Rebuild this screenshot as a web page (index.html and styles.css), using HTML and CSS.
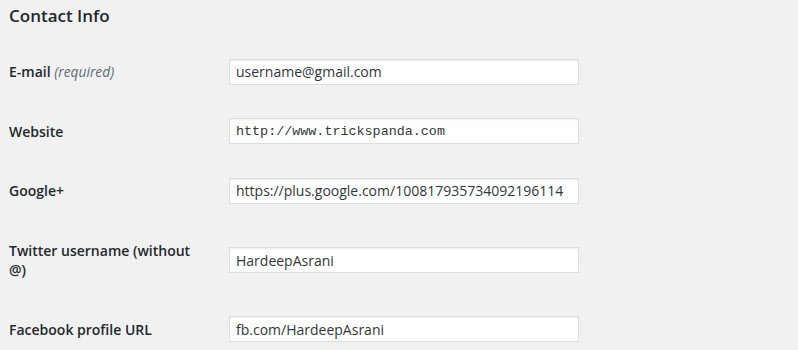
FILE: index.html
```html
<!DOCTYPE html>
<html>
<head>
  <title>Profile - Contact Info</title>
  <link rel="stylesheet" href="styles.css">
</head>
<body>

  <h2 class="section-title">Contact Info</h2>

  <div class="form-table">
    <div class="form-row">
      <label class="form-label" for="email">E-mail <span class="description">(required)</span></label>
      <div class="form-field">
        <input type="email" id="email" class="regular-text" value="username@gmail.com">
      </div>
    </div>
    <div class="form-row">
      <label class="form-label" for="url">Website</label>
      <div class="form-field">
        <input type="url" id="url" class="regular-text code" value="http://www.trickspanda.com">
      </div>
    </div>
    <div class="form-row">
      <label class="form-label" for="googleplus">Google+</label>
      <div class="form-field">
        <input type="text" id="googleplus" class="regular-text" value="https://plus.google.com/100817935734092196114">
      </div>
    </div>
    <div class="form-row">
      <label class="form-label" for="twitter">Twitter username (without @)</label>
      <div class="form-field">
        <input type="text" id="twitter" class="regular-text" value="HardeepAsrani">
      </div>
    </div>
    <div class="form-row">
      <label class="form-label" for="facebook">Facebook profile URL</label>
      <div class="form-field">
        <input type="text" id="facebook" class="regular-text" value="fb.com/HardeepAsrani">
      </div>
    </div>
  </div>

</body>
</html>
```

FILE: styles.css
```css
body {
  margin: 0;
  padding: 0 9px;
  background-color: #f1f1f1;
  color: #23282d;
  font-family: "Open Sans", sans-serif;
  font-size: 14px;
}
.section-title {
  font-size: 17px;
  font-weight: 600;
  line-height: 22px;
  margin: 5px 0 15px;
}
.form-table {
  display: grid;
  grid-template-columns: 210px 1fr;
}
.form-row {
  display: contents;
}
.form-label {
  width: 200px;
  padding: 20px 10px 20px 0;
  font-weight: 600;
  line-height: 19.5px;
}
.description {
  font-size: 13.8px;
  font-style: italic;
  font-weight: normal;
  color: #5f6b7a;
}
.form-field {
  display: flex;
  align-items: center;
  padding: 15px 10px;
}
.regular-text {
  box-sizing: border-box;
  width: 350px;
  height: 26px;
  margin: 1.75px 0;
  padding: 3px 6px;
  border: 1px solid #ddd;
  box-shadow: inset 0 1px 2px rgba(0, 0, 0, 0.07);
  background-color: #fff;
  color: #32373c;
  font-family: "Open Sans", sans-serif;
  font-size: 14px;
  outline: none;
}
.code {
  font-family: "Liberation Mono", monospace;
  font-size: 13.4px;
}
```
